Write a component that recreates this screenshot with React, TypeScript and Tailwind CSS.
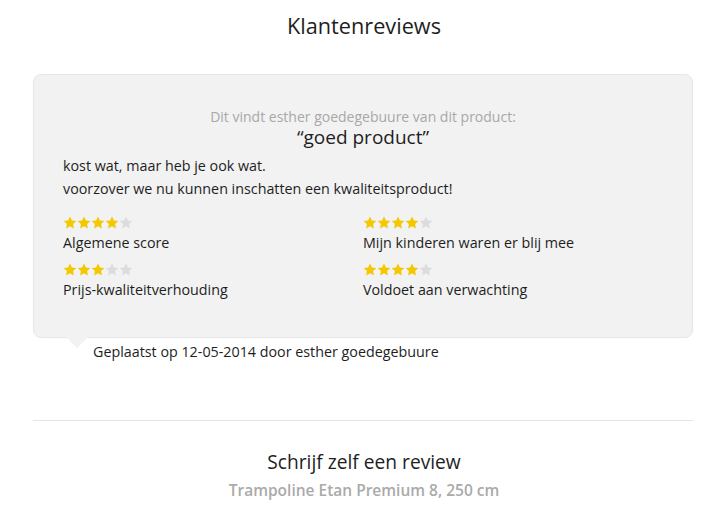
import React from "react";

const Star = ({ on }: { on: boolean }) => (
  <svg width="14" height="13" viewBox="0 0 24 23" className="shrink-0">
    <path
      d="M12 0.8l3.4 7.1 7.8 1-5.7 5.4 1.4 7.7L12 18.3 5.1 22l1.4-7.7L0.8 8.9l7.8-1z"
      fill={on ? "#f4c800" : "#dcdcdc"}
    />
  </svg>
);

const Stars = ({ n }: { n: number }) => (
  <div className="flex h-[13px]">
    {[0, 1, 2, 3, 4].map((i) => (
      <Star key={i} on={i < n} />
    ))}
  </div>
);

const Rating = ({ n, label }: { n: number; label: string }) => (
  <div className="flex flex-col">
    <Stars n={n} />
    <div className="mt-[4px] text-[14.3px] leading-[20px] text-[#1e1e1e]">{label}</div>
  </div>
);

export default function App() {
  return (
    <div
      className="w-[728px] h-[512px] bg-white overflow-hidden"
      style={{ fontFamily: '"Open Sans", "Noto Sans", sans-serif' }}
    >
      <h1 className="pt-[12px] text-center text-[21.7px] leading-[28px] text-[#1e1e1e]">Klantenreviews</h1>
      <div className="ml-[33px] mr-[35px] mt-[34px]">
        <div className="relative rounded-[8px] border border-[#e6e6e6] bg-[#f2f2f2] px-[29px] pt-[33px] pb-[37px]">
          <div className="text-center text-[14px] leading-[18px] text-[#a8a8a8]">
            Dit vindt esther goedegebuure van dit product:
          </div>
          <div className="text-center text-[19px] leading-[22px] text-[#1e1e1e]">“goed product”</div>
          <div className="mt-[6px] text-[14.3px] leading-[23px] text-[#1e1e1e]">
            <div>kost wat, maar heb je ook wat.</div>
            <div>voorzover we nu kunnen inschatten een kwaliteitsproduct!</div>
          </div>
          <div className="mt-[16px] grid grid-cols-2 gap-y-[10px]">
            <Rating n={4} label="Algemene score" />
            <Rating n={4} label="Mijn kinderen waren er blij mee" />
            <Rating n={3} label="Prijs-kwaliteitverhouding" />
            <Rating n={4} label="Voldoet aan verwachting" />
          </div>
          <div className="absolute left-[32px] top-full h-0 w-0 border-x-[11px] border-t-[11px] border-x-transparent border-t-[#f2f2f2]" />
        </div>
        <div className="mt-[4px] pl-[60px] text-[14.3px] leading-[20px] text-[#1e1e1e]">
          Geplaatst op 12-05-2014 door esther goedegebuure
        </div>
        <div className="mt-[58px] border-t border-[#e5e5e5]" />
      </div>
      <div className="mt-[28px] text-center text-[19.2px] leading-[26px] text-[#1e1e1e]">Schrijf zelf een review</div>
      <div className="mt-[4px] text-center text-[15.5px] leading-[22px] font-semibold text-[#aaaaaa]">
        Trampoline Etan Premium 8, 250 cm
      </div>
    </div>
  );
}
